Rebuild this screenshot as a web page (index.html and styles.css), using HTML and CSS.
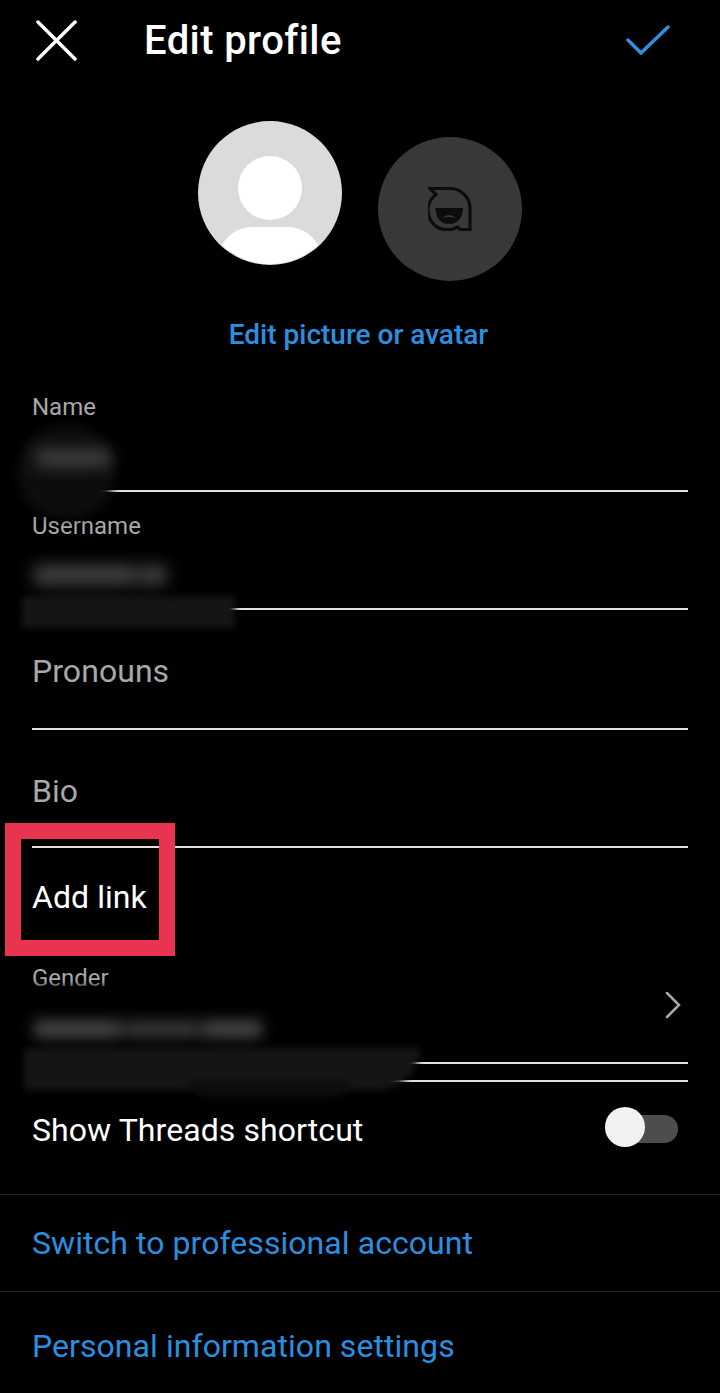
FILE: index.html
```html
<!DOCTYPE html>
<html lang="en">
<head>
  <meta charset="UTF-8" />
  <meta name="viewport" content="width=device-width, initial-scale=1.0"/>
  <title>Edit profile</title>
  <link rel="stylesheet" href="styles.css">
</head>
<body>
  <div class="page">

    <header class="topbar">
      <svg class="icon-close" viewBox="0 0 42 42"><path d="M2 2 L40 40 M40 2 L2 40"/></svg>
      <h1>Edit profile</h1>
      <svg class="icon-check" viewBox="0 0 44 30"><path d="M2 15 L15 28 L42 2"/></svg>
    </header>

    <div class="avatars">
      <svg class="avatar" viewBox="0 0 144 144">
        <defs><clipPath id="round"><circle cx="72" cy="72" r="71"/></clipPath></defs>
        <circle cx="72" cy="72" r="72" fill="#dbdbdb"/>
        <circle cx="72" cy="67" r="32" fill="#fff"/>
        <path clip-path="url(#round)" d="M22 128 C28 114 40 106 56 106 H88 C104 106 116 114 122 128 V144 H22 Z" fill="#fff"/>
      </svg>
      <div class="avatar-alt">
        <svg viewBox="0 0 44 44">
          <path class="bubble" d="M2 1.5 H22 A20 20 0 0 1 42 21 V42.5 H32 L29.5 40 A19.5 19.5 0 0 1 8 7.5 Z"/>
          <path class="smile" d="M7.5 21 H35 C35 30 30 37 21 37 C12 37 7.5 30 7.5 21 Z"/>
          <path class="tongue" d="M14 31 Q21 25 28 31 Q21 29 14 31 Z"/>
        </svg>
      </div>
    </div>

    <a class="edit-picture">Edit picture or avatar</a>

    <section class="fields">
      <div class="field field-name"><label>Name</label></div>
      <div class="field field-username"><label>Username</label></div>
      <div class="field field-empty field-pronouns"><span>Pronouns</span></div>
      <div class="field field-empty field-bio"><span>Bio</span></div>
      <div class="add-link">Add link</div>
      <div class="field field-gender">
        <label>Gender</label>
        <svg class="icon-chevron" viewBox="0 0 16 28"><path d="M2 2 L14 14 L2 26"/></svg>
      </div>
      <div class="field field-blank"></div>
      <div class="toggle-row">
        <span>Show Threads shortcut</span>
        <div class="toggle"><div class="knob"></div></div>
      </div>
    </section>

    <a class="link-row link-first">Switch to professional account</a>
    <a class="link-row link-last">Personal information settings</a>

    <!-- blurred out values, painted over the form -->
    <div class="smudge s-name-dark"></div>
    <div class="smudge s-name"></div>
    <div class="smudge s-user-dark"></div>
    <div class="smudge s-user"></div>
    <div class="smudge s-gender-dark"></div>
    <div class="smudge s-gender-low"></div>
    <div class="smudge s-gender-top"></div>
    <div class="smudge s-gender"></div>

    <div class="highlight"></div>
  </div>
</body>
</html>
```

FILE: styles.css
```css
* {
  margin: 0; padding: 0; box-sizing: border-box;
  font-family: 'Roboto', sans-serif;
}
body {
  background: #000;
  color: #fff;
}
.page {
  position: relative;
  width: 720px;
  height: 1393px;
  overflow: hidden;
}

/* top bar */
.topbar {
  display: flex;
  align-items: center;
  height: 80px;
  padding: 0 50px 0 36px;
}
.topbar h1 {
  font-size: 40px;
  font-weight: 500;
  letter-spacing: 0.4px;
  margin-left: 67px;
  flex: 1;
}
.topbar svg { fill: none; stroke-linecap: round; }
.icon-close { width: 41px; height: 41px; stroke: #fff; stroke-width: 3.5; }
.icon-check { width: 44px; height: 30px; stroke: #2f8fe0; stroke-width: 3.5; }

/* avatars */
.avatars {
  display: flex;
  justify-content: center;
  gap: 36px;
  margin-top: 41px;
}
.avatar { width: 144px; height: 144px; }
.avatar-alt {
  width: 144px;
  height: 144px;
  margin-top: 16px;
  border-radius: 50%;
  background: #383838;
  display: flex;
  align-items: center;
  justify-content: center;
}
.avatar-alt svg { width: 44px; height: 44px; }
.bubble { fill: none; stroke: #0c0c0c; stroke-width: 3.2; }
.smile { fill: #0c0c0c; }
.tongue { fill: #383838; }

.edit-picture {
  display: block;
  margin-top: 38px;
  height: 32px;
  line-height: 32px;
  text-align: center;
  font-size: 28px;
  font-weight: 500;
  color: #2b8fe0;
  padding-right: 3px;
}

/* form */
.fields {
  margin-top: 42px;
  padding: 0 32px;
}
.field {
  position: relative;
  border-bottom: 2px solid #e2e2e2;
}
.field label {
  display: block;
  font-size: 24px;
  line-height: 28px;
  color: #a8a8a8;
}
.field-name { height: 99px; }
.field-username { height: 118px; padding-top: 20px; }
.field-empty {
  font-size: 32px;
  letter-spacing: 0.06px;
  color: #a8a8a8;
}
.field-pronouns { height: 120px; padding-top: 43px; }
.field-bio { height: 118px; padding-top: 43px; }
.field-empty span { display: block; line-height: 36px; }
.add-link {
  height: 118px;
  padding-top: 31px;
  font-size: 32px;
  letter-spacing: 0.06px;
  line-height: 36px;
  color: #fff;
}
.field-gender { height: 100px; margin-top: -2px; }
.field-blank { height: 18px; }
.icon-chevron {
  position: absolute;
  right: 7px;
  top: 27px;
  width: 16px;
  height: 28px;
  fill: none;
  stroke: #a8a8a8;
  stroke-width: 2.5;
  stroke-linecap: round;
}
.toggle-row {
  display: flex;
  align-items: center;
  justify-content: space-between;
  height: 96px;
  font-size: 32px;
  letter-spacing: 0.08px;
  padding-right: 10px;
}
.toggle {
  position: relative;
  width: 73px;
  height: 28px;
  border-radius: 14px;
  background: #4d4d4d;
  margin-top: -2px;
}
.knob {
  position: absolute;
  left: 0;
  top: -8px;
  width: 40px;
  height: 40px;
  border-radius: 50%;
  background: #f2f2f2;
}
.link-row {
  display: block;
  padding: 0 32px;
  font-size: 32px;
  letter-spacing: 0.06px;
  color: #2b8fe0;
  border-top: 1px solid #222;
}
.link-first { margin-top: 16px; height: 97px; line-height: 96px; }
.link-last { height: 100px; line-height: 109px; }

/* blurred values */
.smudge {
  position: absolute;
  filter: blur(5px);
}
.s-name-dark { left: 18px; top: 426px; width: 97px; height: 92px; border-radius: 44px; background: #0d0d0d; }
.s-name { left: 36px; top: 449px; width: 74px; height: 18px; background: #404040; filter: blur(8px); }
.s-user-dark { left: 22px; top: 596px; width: 213px; height: 32px; background: #151515; filter: blur(3px); }
.s-user { left: 34px; top: 565px; width: 132px; height: 20px; background: linear-gradient(90deg, #424242 70%, #2e2e2e 78%, #424242 90%); filter: blur(8px); }
.s-gender-dark { left: 24px; top: 1048px; width: 396px; height: 42px; border-radius: 0 0 60px 0; background: #151515; filter: blur(3px); }
.s-gender-low { left: 190px; top: 1080px; width: 160px; height: 17px; border-radius: 0 0 40px 40px; background: #0d0d0d; filter: blur(3px); }
.s-gender-top { left: 34px; top: 986px; width: 76px; height: 22px; background: #000; filter: blur(3px); }
.s-gender { left: 34px; top: 1020px; width: 228px; height: 18px; background: linear-gradient(90deg, #444 36%, #1e1e1e 39%, #363636 42%, #363636 70%, #1e1e1e 73%, #444 76%); filter: blur(7px); }

/* red annotation box */
.highlight {
  position: absolute;
  left: 5px;
  top: 823px;
  width: 170px;
  height: 133px;
  border: 16px solid #e8344e;
}
```
